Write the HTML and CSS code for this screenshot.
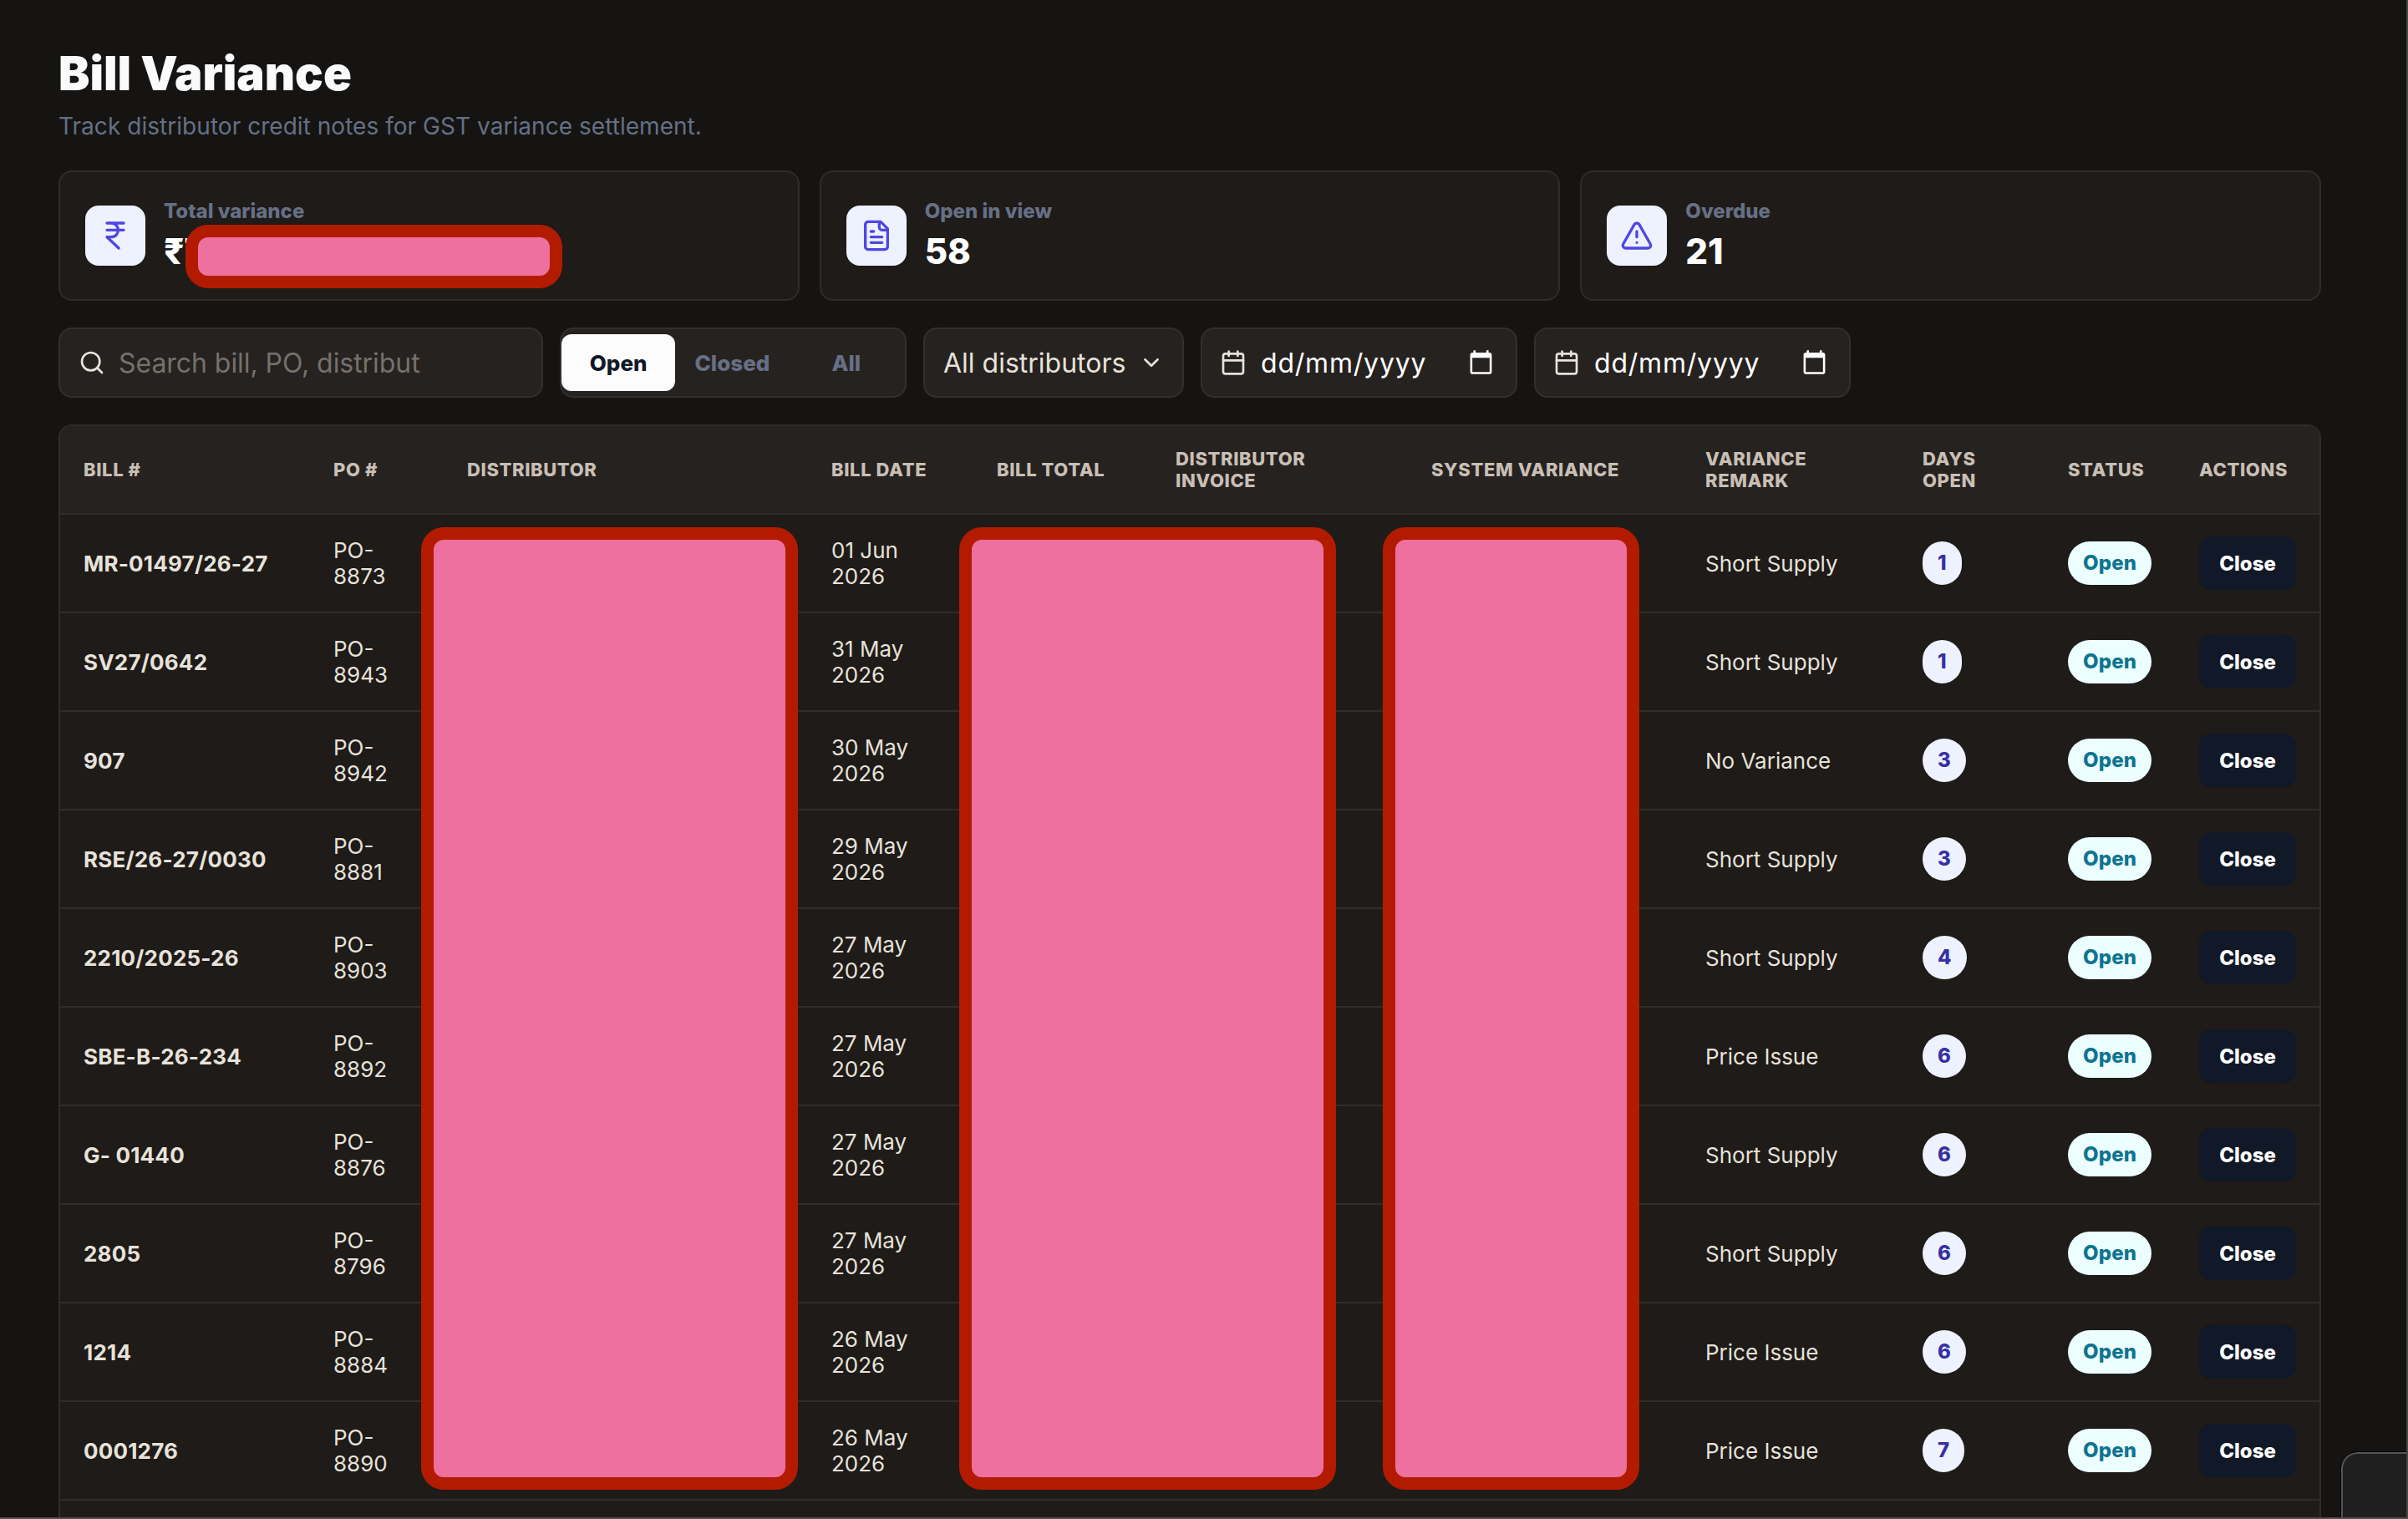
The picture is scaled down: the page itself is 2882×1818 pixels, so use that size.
FILE: index.html
```html
<!DOCTYPE html>
<html lang="en">
<head>
    <meta charset="UTF-8">
    <meta name="viewport" content="width=device-width, initial-scale=1.0">
    <title>Bill Variance</title>

    <link rel="stylesheet" href="styles.css">
</head>
<body>

    <main class="page">
        <h1>Bill Variance</h1>
        <p class="subtitle">Track distributor credit notes for GST variance settlement.</p>

        <section class="cards">
            <div class="card">
                <div class="card-icon">
                    <svg viewBox="0 0 24 24"><path d="M6 3h12M6 8h12M6 13l8.5 8M6 13h3c6.667 0 6.667-10 0-10"/></svg>
                </div>
                <div>
                    <div class="card-label">Total variance</div>
                    <div class="card-value">₹7</div>
                </div>
                <div class="mask mask-total"></div>
            </div>
            <div class="card">
                <div class="card-icon">
                    <svg viewBox="0 0 24 24"><path d="M15 2H6a2 2 0 0 0-2 2v16a2 2 0 0 0 2 2h12a2 2 0 0 0 2-2V7Z"/><path d="M14 2v4a2 2 0 0 0 2 2h4M10 9H8M16 13H8M16 17H8"/></svg>
                </div>
                <div>
                    <div class="card-label">Open in view</div>
                    <div class="card-value">58</div>
                </div>
            </div>
            <div class="card">
                <div class="card-icon">
                    <svg viewBox="0 0 24 24"><path d="m21.73 18-8-14a2 2 0 0 0-3.48 0l-8 14A2 2 0 0 0 4 21h16a2 2 0 0 0 1.73-3"/><path d="M12 9v4M12 17h.01"/></svg>
                </div>
                <div>
                    <div class="card-label">Overdue</div>
                    <div class="card-value">21</div>
                </div>
            </div>
        </section>

        <section class="filters">
            <div class="field search">
                <svg viewBox="0 0 24 24"><circle cx="11" cy="11" r="8"/><path d="m21 21-4.3-4.3"/></svg>
                <span>Search bill, PO, distribut</span>
            </div>
            <div class="tabs">
                <button class="tab active">Open</button>
                <button class="tab">Closed</button>
                <button class="tab">All</button>
            </div>
            <div class="field select">
                <span>All distributors</span>
                <svg class="chevron" viewBox="0 0 24 24"><path d="m5 8.500 7 7 7-7"/></svg>
            </div>
            <div class="field date">
                <svg viewBox="0 0 24 24"><path d="M8 2v4M16 2v4M3 10h18"/><rect x="3" y="4" width="18" height="18" rx="2"/></svg>
                <span>dd/mm/yyyy</span>
                <svg class="picker" viewBox="0 0 24 24"><path d="M20 3h-1V1h-2v2H7V1H5v2H4c-1.100 0-2 .9-2 2v16c0 1.100.9 2 2 2h16c1.100 0 2-.9 2-2V5c0-1.100-.9-2-2-2zm0 18H4V8h16v13z"/></svg>
            </div>
            <div class="field date">
                <svg viewBox="0 0 24 24"><path d="M8 2v4M16 2v4M3 10h18"/><rect x="3" y="4" width="18" height="18" rx="2"/></svg>
                <span>dd/mm/yyyy</span>
                <svg class="picker" viewBox="0 0 24 24"><path d="M20 3h-1V1h-2v2H7V1H5v2H4c-1.100 0-2 .9-2 2v16c0 1.100.9 2 2 2h16c1.100 0 2-.9 2-2V5c0-1.100-.9-2-2-2zm0 18H4V8h16v13z"/></svg>
            </div>
        </section>

        <div class="table-wrap">
            <table>
                <colgroup>
                    <col class="c-bill">
                    <col class="c-po">
                    <col class="c-distributor">
                    <col class="c-date">
                    <col class="c-total">
                    <col class="c-invoice">
                    <col class="c-variance">
                    <col class="c-remark">
                    <col class="c-days">
                    <col class="c-status">
                    <col class="c-actions">
                </colgroup>
                <thead>
                    <tr>
                        <th>Bill #</th>
                        <th>PO #</th>
                        <th>Distributor</th>
                        <th>Bill date</th>
                        <th>Bill total</th>
                        <th>Distributor<br>invoice</th>
                        <th>System variance</th>
                        <th>Variance<br>remark</th>
                        <th>Days<br>open</th>
                        <th>Status</th>
                        <th>Actions</th>
                    </tr>
                </thead>
                <tbody id="billRows">
                    <!-- Bill rows will be inserted here -->
                </tbody>
            </table>
            <div class="mask mask-distributor"></div>
            <div class="mask mask-amounts"></div>
            <div class="mask mask-variance"></div>
        </div>
    </main>

    <div class="corner-panel"></div>

    <script src="script.js"></script>
</body>
</html>
```

FILE: styles.css
```css
* {
    box-sizing: border-box;
}
html {
    height: 1818px;
    overflow: hidden;
}
body {
    margin: 0;
    height: 1818px;
    overflow: hidden;
    position: relative;
    background-color: #151412;
    color: #e7e2da;
    font-family: Inter, sans-serif;
    border-right: 2px solid #484846;
    border-bottom: 2px solid #53524f;
}
.page {
    width: 2708px;
    margin-left: 70px;
    padding-top: 54px;
}
h1 {
    margin: 0;
    color: #fafafa;
    font-size: 56px;
    font-weight: 900;
    line-height: 68px;
}
.subtitle {
    margin: 10px 0 34px;
    color: #667085;
    font-size: 28px;
    line-height: 38px;
    letter-spacing: 0.04px;
}
svg {
    fill: none;
    stroke: currentColor;
    stroke-width: 2;
    stroke-linecap: round;
    stroke-linejoin: round;
    flex: none;
}

/* Summary cards */
.cards {
    display: grid;
    grid-template-columns: repeat(3, 1fr);
    gap: 24px;
}
.card {
    position: relative;
    display: flex;
    align-items: center;
    gap: 22px;
    height: 156px;
    padding: 0 30px;
    background-color: #1e1b18;
    border: 2px solid #2f2d2a;
    border-radius: 16px;
}
.card-icon {
    display: flex;
    align-items: center;
    justify-content: center;
    width: 72px;
    height: 72px;
    border-radius: 16px;
    background-color: #eef2ff;
    color: #4f46e5;
}
.card-icon svg {
    width: 40px;
    height: 40px;
}
.card-label {
    color: #667085;
    font-size: 24px;
    font-weight: 800;
    line-height: 30px;
}
.card-value {
    margin-top: 8px;
    color: #fff;
    font-size: 42px;
    font-weight: 800;
    line-height: 50px;
}

/* Filter bar */
.filters {
    display: flex;
    gap: 20px;
    margin: 32px 0;
}
.field,
.tabs {
    display: flex;
    align-items: center;
    height: 84px;
    background-color: #26221f;
    border: 2px solid #33302c;
    border-radius: 16px;
}
.field {
    padding: 0 22px;
    font-size: 32px;
    white-space: nowrap;
}
.field svg {
    width: 32px;
    height: 32px;
}
.search {
    width: 580px;
    gap: 16px;
}
.search span {
    color: #75716c;
    letter-spacing: -0.05px;
}
.tabs {
    width: 415px;
    padding-right: 2px;
}
.tab {
    flex: 1;
    height: 68px;
    padding: 0;
    border: none;
    border-radius: 12px;
    background: none;
    color: #667085;
    font-family: inherit;
    font-size: 26px;
    font-weight: 800;
}
.tab.active {
    background-color: #fcfcfd;
    color: #111827;
}
.select {
    width: 312px;
    justify-content: space-between;
}
.field .chevron {
    width: 26px;
    height: 26px;
    margin-right: 2px;
    stroke-width: 2.4;
}
.date {
    width: 379px;
    padding: 0 22px 0 21px;
}
.date svg {
    width: 32px;
    height: 32px;
}
.date span {
    margin: 0 auto 0 17px;
    color: #fff;
    letter-spacing: 0.8px;
}
.date .picker {
    fill: #fff;
    stroke: none;
    width: 31px;
    height: 31px;
    margin: 0 4px 2px 0;
}

/* Bills table */
.table-wrap {
    position: relative;
    height: 1400px;
    background-color: #1e1b18;
    border: 2px solid #2f2d2a;
    border-radius: 16px 16px 0 0;
}
table {
    width: 2704px;
    table-layout: fixed;
    border-collapse: separate;
    border-spacing: 0;
}
.c-bill { width: 299px; }
.c-po { width: 160px; }
.c-distributor { width: 436px; }
.c-date { width: 198px; }
.c-total { width: 214px; }
.c-invoice { width: 306px; }
.c-variance { width: 328px; }
.c-remark { width: 260px; }
.c-days { width: 174px; }
.c-status { width: 157px; }
.c-actions { width: 172px; }
th, td {
    padding: 0 0 0 28px;
    border-bottom: 2px solid #302e2b;
    text-align: left;
    vertical-align: middle;
}
th {
    height: 106px;
    background-color: #26221f;
    color: #c8bfb5;
    font-size: 22px;
    font-weight: 800;
    line-height: 26px;
    letter-spacing: 0.6px;
    text-transform: uppercase;
    white-space: nowrap;
}
th:first-child {
    border-top-left-radius: 14px;
}
th:last-child {
    border-top-right-radius: 14px;
}
td {
    height: 118px;
    font-size: 26px;
    line-height: 31px;
}
.bill {
    font-weight: 700;
    letter-spacing: 0.2px;
}
.pill {
    display: inline-block;
    height: 52px;
    padding: 0 18px;
    border-radius: 26px;
    font-size: 24px;
    font-weight: 800;
    line-height: 52px;
    letter-spacing: 0.2px;
    vertical-align: middle;
}
.days {
    background-color: #eef2ff;
    color: #3730a3;
}
.status {
    background-color: #ecfeff;
    color: #0e7490;
}
.close {
    display: block;
    width: 116px;
    height: 64px;
    padding: 0;
    border: none;
    border-radius: 14px;
    background-color: #111827;
    color: #fff;
    font-family: inherit;
    font-size: 24px;
    font-weight: 800;
}

/* Boxes that hide private values */
.mask {
    position: absolute;
    background-color: #ed709e;
    border: 15px solid #b31b00;
    border-radius: 27px;
}
.mask-total {
    left: 150px;
    top: 63px;
    width: 451px;
    height: 76px;
}
.mask-distributor,
.mask-amounts,
.mask-variance {
    top: 121px;
    height: 1152px;
}
.mask-distributor {
    left: 432px;
    width: 451px;
}
.mask-amounts {
    left: 1076px;
    width: 451px;
}
.mask-variance {
    left: 1583px;
    width: 307px;
}

.corner-panel {
    position: absolute;
    right: 0;
    bottom: 0;
    width: 78px;
    height: 78px;
    background-color: #1f1f1f;
    border: 2px solid #555;
    border-right-width: 0;
    border-bottom-width: 0;
    border-radius: 20px 0 0 0;
    box-shadow: 0 0 0 1px #000;
}
```

FILE: script.js
```js
const bills = [
    ['MR-01497/26-27', '8873', '01 Jun', 'Short Supply', 1],
    ['SV27/0642', '8943', '31 May', 'Short Supply', 1],
    ['907', '8942', '30 May', 'No Variance', 3],
    ['RSE/26-27/0030', '8881', '29 May', 'Short Supply', 3],
    ['2210/2025-26', '8903', '27 May', 'Short Supply', 4],
    ['SBE-B-26-234', '8892', '27 May', 'Price Issue', 6],
    ['G- 01440', '8876', '27 May', 'Short Supply', 6],
    ['2805', '8796', '27 May', 'Short Supply', 6],
    ['1214', '8884', '26 May', 'Price Issue', 6],
    ['0001276', '8890', '26 May', 'Price Issue', 7]
];

const billRows = document.getElementById('billRows');

bills.forEach(([bill, po, date, remark, days]) => {
    billRows.innerHTML += `
        <tr>
            <td class="bill">${bill}</td>
            <td>PO-<br>${po}</td>
            <td></td>
            <td>${date}<br>2026</td>
            <td></td>
            <td></td>
            <td></td>
            <td>${remark}</td>
            <td><span class="pill days">${days}</span></td>
            <td><span class="pill status">Open</span></td>
            <td><button class="close">Close</button></td>
        </tr>
    `;
});
```
